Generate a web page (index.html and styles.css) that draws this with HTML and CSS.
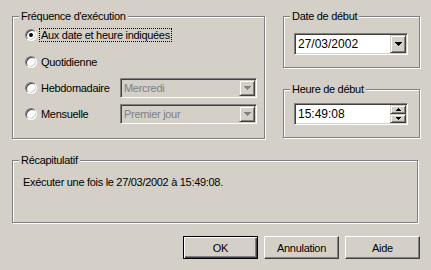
FILE: index.html
```html
<!DOCTYPE html>
<html>
    <head>
        <meta charset="utf-8">
        <title>Planification</title>
        <link rel="stylesheet" href="styles.css">
    </head>
    <body>
        <div class="dialog">
            <div class="top">
                <div class="group freq">
                    <span class="group-title">Fréquence d'exécution</span>
                    <div class="choices">
                        <span class="radio checked"></span>
                        <span class="choice-label wide focus">Aux date et heure indiquées</span>

                        <span class="radio"></span>
                        <span class="choice-label wide">Quotidienne</span>

                        <span class="radio"></span>
                        <span class="choice-label">Hebdomadaire</span>
                        <div class="combo disabled">
                            <span class="combo-text">Mercredi</span>
                            <span class="btn3d drop-btn">
                                <svg width="7" height="4" shape-rendering="crispEdges"><path d="M0 0h7v1h-1v1h-1v1h-1v1h-1v-1h-1v-1h-1v-1h-1z" fill="#808080"/></svg>
                            </span>
                        </div>

                        <span class="radio"></span>
                        <span class="choice-label">Mensuelle</span>
                        <div class="combo disabled">
                            <span class="combo-text">Premier jour</span>
                            <span class="btn3d drop-btn">
                                <svg width="7" height="4" shape-rendering="crispEdges"><path d="M0 0h7v1h-1v1h-1v1h-1v1h-1v-1h-1v-1h-1v-1h-1z" fill="#808080"/></svg>
                            </span>
                        </div>
                    </div>
                </div>

                <div class="side">
                    <div class="group date">
                        <span class="group-title">Date de début</span>
                        <div class="combo field">
                            <span class="combo-text">27/03/2002</span>
                            <span class="btn3d drop-btn">
                                <svg width="7" height="4" shape-rendering="crispEdges"><path d="M0 0h7v1h-1v1h-1v1h-1v1h-1v-1h-1v-1h-1v-1h-1z" fill="#000"/></svg>
                            </span>
                        </div>
                    </div>
                    <div class="group time">
                        <span class="group-title">Heure de début</span>
                        <div class="combo field">
                            <span class="combo-text">15:49:08</span>
                            <span class="spin">
                                <span class="btn3d spin-btn">
                                    <svg width="5" height="3" shape-rendering="crispEdges"><path d="M0 3h5v-1h-1v-1h-1v-1h-1v1h-1v1h-1z" fill="#000"/></svg>
                                </span>
                                <span class="btn3d spin-btn">
                                    <svg width="5" height="3" shape-rendering="crispEdges"><path d="M0 0h5v1h-1v1h-1v1h-1v-1h-1v-1h-1z" fill="#000"/></svg>
                                </span>
                            </span>
                        </div>
                    </div>
                </div>
            </div>

            <div class="group recap">
                <span class="group-title">Récapitulatif</span>
                <p class="recap-text">Exécuter une fois le 27/03/2002 à 15:49:08.</p>
            </div>

            <div class="buttons">
                <button class="push default">OK</button>
                <button class="push">Annulation</button>
                <button class="push">Aide</button>
            </div>
        </div>
    </body>
</html>
```

FILE: styles.css
```css
body {
  margin: 0;
  background: #d4d0c8;
  font: 11px "Liberation Sans", Arial, sans-serif;
  letter-spacing: -0.3px;
  color: #000;
}
.dialog {
  width: 431px;
  height: 270px;
  padding: 16px 0 0 12px;
  box-sizing: border-box;
}
.top {
  display: grid;
  grid-template-columns: 253px 137px;
  column-gap: 18px;
  align-items: start;
}

/* etched group boxes */
.group {
  border: 1px solid #808080;
  box-shadow: inset 1px 1px 0 #fff, 1px 1px 0 #fff;
  box-sizing: border-box;
}
.group-title {
  display: block;
  width: fit-content;
  margin: -7px 0 0 6px;
  padding: 0 2px;
  line-height: 13px;
  background: #d4d0c8;
}
.freq {
  height: 123px;
}
.date {
  height: 52px;
}
.time {
  height: 49px;
  margin-top: 21px;
}
.recap {
  width: 406px;
  height: 63px;
  margin-top: 21px;
}
.recap-text {
  margin: 9px 0 0 10px;
  line-height: 13px;
}

/* radio list */
.choices {
  display: grid;
  grid-template-columns: 12px 79px 137px;
  grid-template-rows: 26px 27px 26px 26px;
  column-gap: 2px;
  align-items: center;
  margin: -1px 0 0 12px;
}
.wide {
  grid-column: 2 / 4;
  justify-self: start;
}
.choice-label {
  padding: 0 1px;
  border: 1px dotted transparent;
  line-height: 12px;
  white-space: nowrap;
}
.choice-label.focus {
  border-color: #000;
}
.radio {
  width: 12px;
  height: 12px;
  box-sizing: border-box;
  border-radius: 50%;
  background: #fff;
  border: 1px solid;
  border-color: #808080 #fff #fff #808080;
  box-shadow: inset 1px 1px 0 #404040, inset -1px -1px 0 #d4d0c8;
  display: flex;
  align-items: center;
  justify-content: center;
}
.radio.checked::after {
  content: "";
  width: 4px;
  height: 4px;
  border-radius: 50%;
  background: #000;
}

/* combos and edits */
.combo {
  display: flex;
  align-items: center;
  height: 20px;
  box-sizing: border-box;
  padding: 1px;
  background: #fff;
  border: 1px solid;
  border-color: #808080 #fff #fff #808080;
  box-shadow: inset 1px 1px 0 #404040, inset -1px -1px 0 #d4d0c8;
}
.combo.disabled {
  background: #d4d0c8;
  color: #808080;
}
.combo.field {
  width: 114px;
  height: 22px;
  margin: 10px 0 0 10px;
  font-size: 12px;
  letter-spacing: 0;
}
.time .combo.field {
  margin-top: 7px;
}
.combo-text {
  flex: 1;
  padding-left: 2px;
  white-space: nowrap;
}
.btn3d {
  box-sizing: border-box;
  background: #d4d0c8;
  border: 1px solid;
  border-color: #d4d0c8 #404040 #404040 #d4d0c8;
  box-shadow: inset 1px 1px 0 #fff, inset -1px -1px 0 #808080;
  display: flex;
  align-items: center;
  justify-content: center;
}
.drop-btn {
  width: 16px;
  align-self: stretch;
}
.spin {
  width: 16px;
  align-self: stretch;
  display: flex;
  flex-direction: column;
}
.spin-btn {
  flex: 1;
}

/* push buttons */
.buttons {
  display: flex;
  justify-content: flex-end;
  gap: 6px;
  margin-top: 13px;
  padding-right: 11px;
}
.push {
  width: 75px;
  height: 23px;
  padding: 0;
  font: inherit;
  letter-spacing: inherit;
  color: #000;
  background: #d4d0c8;
  border: 1px solid;
  border-color: #fff #404040 #404040 #fff;
  box-shadow: inset -1px -1px 0 #808080;
}
.push.default {
  border-color: #000;
  box-shadow: inset 1px 1px 0 #fff, inset -1px -1px 0 #404040, inset -2px -2px 0 #808080;
}
```
